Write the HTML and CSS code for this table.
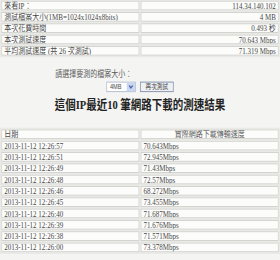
FILE: index.html
```html
<!DOCTYPE html>
<html lang="zh-Hant">
<head>
<meta charset="utf-8">
<title>測速結果</title>
<link rel="stylesheet" href="styles.css">
</head>
<body>
<div class="frame">
<div class="page">
  <table class="grid info">
    <tr><td>來看IP：</td><td class="r">114.34.140.102</td></tr>
    <tr><td>測試檔案大小(1MB=1024x1024x8bits)</td><td class="r">4 MB</td></tr>
    <tr><td>本次花費時間</td><td class="r">0.493 秒</td></tr>
    <tr><td>本次測試速度</td><td class="r">70.643 Mbps</td></tr>
    <tr><td>平均測試速度 (共 26 次測試)</td><td class="r">71.319 Mbps</td></tr>
  </table>

  <div class="form">
    <div class="label">請選擇要測的檔案大小：</div>
    <div class="controls">
      <span class="select"><span class="sel-text">4MB</span><span class="sel-arrow"><svg viewBox="0 0 10 10" width="10" height="10"><path d="M2.5 3.5 L5 6.2 L7.5 3.5" fill="none" stroke="#4d61a8" stroke-width="1.6"/></svg></span></span>
      <span class="btn">再次測試</span>
    </div>
  </div>

  <h2 class="title">這個IP最近10 筆網路下載的測速結果</h2>

  <table class="grid log">
    <tr><td>日期</td><td class="c">實際網路下載傳輸速度</td></tr>
    <tr><td>2013-11-12 12:26:57</td><td>70.643Mbps</td></tr>
    <tr><td>2013-11-12 12:26:51</td><td>72.945Mbps</td></tr>
    <tr><td>2013-11-12 12:26:49</td><td>71.43Mbps</td></tr>
    <tr><td>2013-11-12 12:26:48</td><td>72.57Mbps</td></tr>
    <tr><td>2013-11-12 12:26:46</td><td>68.272Mbps</td></tr>
    <tr><td>2013-11-12 12:26:45</td><td>73.455Mbps</td></tr>
    <tr><td>2013-11-12 12:26:40</td><td>71.687Mbps</td></tr>
    <tr><td>2013-11-12 12:26:39</td><td>71.676Mbps</td></tr>
    <tr><td>2013-11-12 12:26:38</td><td>71.571Mbps</td></tr>
    <tr><td>2013-11-12 12:26:00</td><td>73.378Mbps</td></tr>
  </table>
</div>
</div>
</body>
</html>
```

FILE: styles.css
```css
html, body {
  margin: 0;
  padding: 0;
  background: #f4f4f2;
}

.frame {
  width: 280px;
  height: 260px;
  overflow: hidden;
}

.page {
  width: 400px;
  height: 298px;
  transform: scale(0.7, 0.87);
  transform-origin: 0 0;
  font-family: "Liberation Serif", "Noto Sans CJK TC", serif;
  font-size: 10px;
  color: #474747;
}

.grid {
  width: 400px;
  border-collapse: separate;
  border-spacing: 2px;
  background: #e9e9e6;
  table-layout: fixed;
}

.grid td {
  width: 50%;
  height: 9px;
  line-height: 9px;
  padding: 0 3px;
  background: #fcfcfb;
  border: 1px solid #cdcdca;
  white-space: nowrap;
  overflow: hidden;
}

.grid td.r { text-align: right; }
.grid td.c { text-align: center; color: #5a5a5a; }

.info { margin-top: -1px; }

.form {
  margin-top: 14px;
}

.label {
  width: 242px;
  margin: 0 auto;
  line-height: 12px;
  color: #5a5a5a;
}

.controls {
  margin-top: 2px;
  display: flex;
  justify-content: center;
  gap: 6px;
  height: 12px;
}

.select {
  width: 42px;
  height: 12px;
  box-sizing: border-box;
  border: 1px solid #a9b4c9;
  background: #fff;
  display: flex;
  align-items: center;
  justify-content: space-between;
  font-family: "Liberation Sans", "Noto Sans CJK TC", sans-serif;
  font-size: 8px;
  color: #444;
}

.sel-text { padding-left: 4px; }

.sel-arrow {
  width: 12px;
  height: 10px;
  background: #c9d7f3;
  display: flex;
  align-items: center;
  justify-content: center;
}

.btn {
  width: 48px;
  height: 12px;
  box-sizing: border-box;
  border: 1px solid #7d8aa8;
  background: #eef0f4;
  font-size: 8px;
  line-height: 10px;
  text-align: center;
  color: #444;
}

.title {
  margin: 6px 0 0;
  font-size: 15px;
  line-height: 18px;
  font-weight: bold;
  text-align: center;
  color: #222;
}

.log { margin-top: 17px; }
```
